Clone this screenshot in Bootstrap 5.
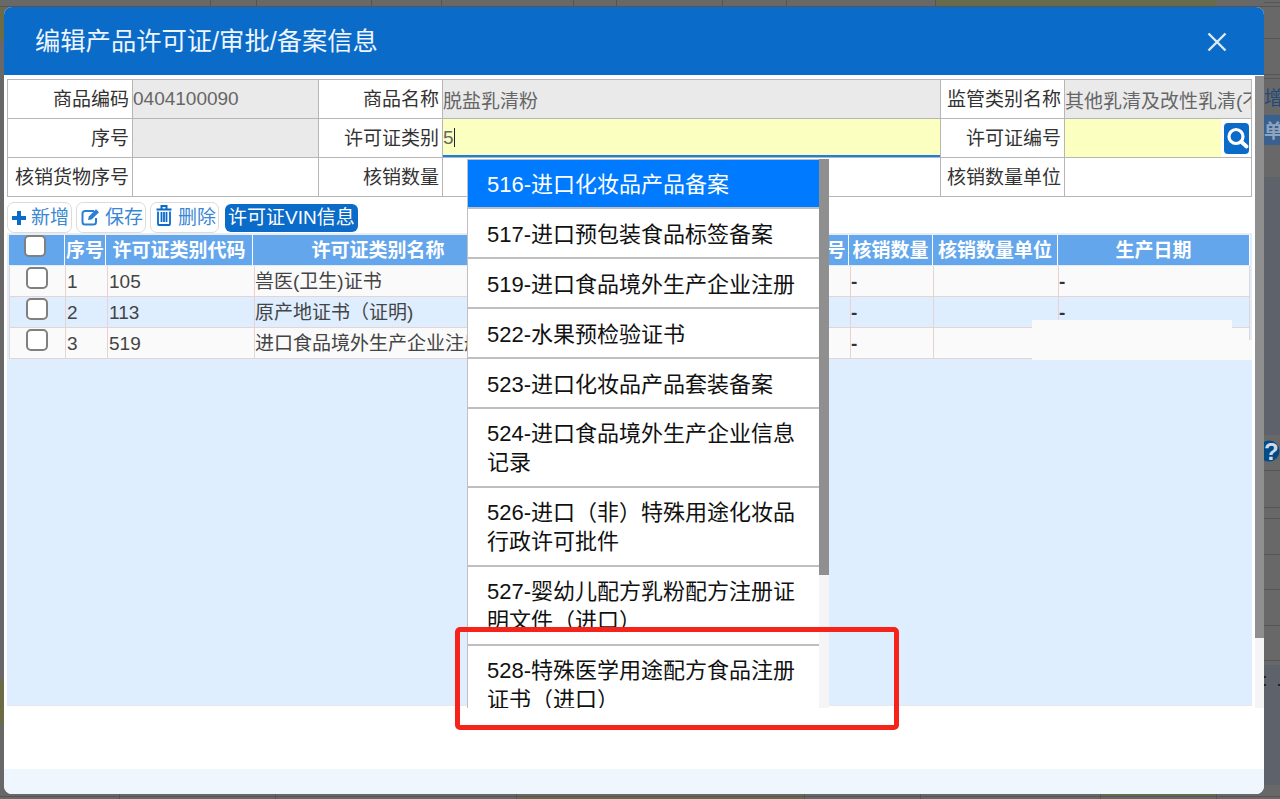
<!DOCTYPE html>
<html lang="zh-CN">
<head>
<meta charset="utf-8">
<title>编辑产品许可证/审批/备案信息</title>
<link href="https://cdn.jsdelivr.net/npm/bootstrap@5.3.0/dist/css/bootstrap.min.css" rel="stylesheet">
<style>
html,body{height:799px;overflow:hidden}
body{background:#686868;font-family:"Liberation Sans","Noto Sans CJK SC",sans-serif;font-size:19px;color:#333;position:relative}
.behind{position:absolute;left:0;top:0;width:1280px;height:799px}
.behind text{font-family:"Liberation Sans","Noto Sans CJK SC",sans-serif;font-size:19px}
.behind text.qmark{font-size:24px}
.dlg{position:relative;width:1260px;height:787px;margin:7px 0 0 4px;border:0;border-radius:8px;overflow:hidden;background:#fff}
.dlg-head{height:68px;flex:none;background:#0a6bc9;color:#eef5fd;padding:2px 37px 0 31px;border:0;border-radius:0}
.dlg-title{font-size:25.3px;line-height:1;margin:0;font-weight:400}
.dlg-x{padding:0;border:0;line-height:0}
.dlg-body{height:694px;flex:none;position:relative;padding:0}
.dlg-foot{height:25px;flex:none;background:#eff6fe;border:0;padding:0;border-radius:0}
.pane{width:1251px;padding:4px 3px 0 3px;flex:none}
.vbar{width:9px;height:632px;margin:1px 0 0 0;background:#f5f5f5;flex:none}
.vbar-thumb{height:562px;background:#8f8f8f}
.fm.table{width:1244px;table-layout:fixed;border-color:#b6b6b6;margin:0;--bs-table-bg:#fff}
.fm.table>*>*>*{height:39px;padding:0;border:1px solid #b6b6b6;font-size:19px;color:#333;box-shadow:none;vertical-align:middle}
.fm.table>*>*>th{font-weight:400;text-align:right;padding:2px 3px 0 0}
.fm .form-control{height:38px;border:0;border-radius:0;padding:0;font-size:19px;color:#666;background:transparent;box-shadow:none}
.fm .ro{background:#eaeaea}
.typed{height:38px;background:#fbffc0;border-bottom:2px solid #1a7fe0;color:#666;line-height:38px;padding-left:0}
.caret-bar{display:inline-block;width:1px;height:19px;background:#222;vertical-align:-3px}
.no-fill{width:156px;height:38px;background:#fbffc0;flex:none}
.find-btn{width:25px;height:31px;padding:0;margin-left:3px;border:0;border-radius:4px;background:#0a6bc9;line-height:0;flex:none}
.tools{height:31px;margin-top:5px}
.tool-btn{height:31px;padding:1px 2px 0 3px;font-size:19px;line-height:28px;color:#3a87d4;background:#fff;border:1px solid #dcdcdc;border-radius:7px;white-space:nowrap;justify-content:space-between}
.add-btn{width:65px}
.save-btn{width:70px;padding-left:4px}
.del-btn{width:69px;padding-left:5px}
.del-btn svg{margin-top:-6px}
.save-btn svg{margin-top:-2px}
.vin-btn{height:28px;padding:0 3px;margin-left:2px;font-size:19px;line-height:28px;color:#fff;background:#0a6bc9;border:0;border-radius:6px;white-space:nowrap}
.gridbox{height:473px;width:1245px;background:#deeeff;border-top:2px solid #e8eef3;border-bottom:1px solid #e3e9ef;padding-left:2px}
.gh.table,.gb.table{width:1241px;table-layout:fixed;margin:0;border-collapse:separate;border-spacing:0}
.gh.table>*>*>*{height:30px;padding:0;background:#64a6ec;color:#fff;font-size:19px;font-weight:700;text-align:center;border:0;border-right:1px solid #fff;line-height:28px;white-space:nowrap;overflow:hidden;box-shadow:none}
.gb.table{margin-top:1px}
.gb.table>*>*>*{height:31px;padding:2px 0 0 1px;background:#fafafa;color:#444;font-size:19px;font-weight:400;border:0;border-right:1px solid #e6d3d3;border-bottom:1px solid #e6d3d3;line-height:28px;white-space:nowrap;overflow:hidden;box-shadow:none;vertical-align:middle}
.gb.table>*>tr:nth-child(2)>*{background:#deeeff}
.gb.table>*>*>.chk-cell{padding:0 2px 0 0;text-align:center;line-height:0;vertical-align:top;border-left:1px solid #e6d3d3}
.gb.table>*>*>.name-cell{padding-left:0}
.gb.table>*>*>.dash-cell{font-weight:700;color:#333;padding-left:0}
.gh.table>*>*>.chk-cell{line-height:0;vertical-align:top;padding:0 4px 0 0}
.tick.form-check-input{width:22px;height:22px;margin:1px 0 0;border:2px solid #808080;border-radius:5px;background-color:#fff;float:none}
.gh .tick.form-check-input{margin-top:0}
.ac{position:absolute;left:463px;top:84px;width:362px;height:549px;overflow:hidden;background:#fff}
.ac-list{width:352px;border-radius:0;border-left:1px solid #c0c0c0}
.ac-list .list-group-item{padding:11px 20px 8px 19px;border:0;border-bottom:2px solid #bfbfbf;border-radius:0;font-size:22px;line-height:29px;color:#111;background:#fff}
.ac-list .list-group-item:first-child{padding-top:10px;border-top:1px solid #bfbfbf}
.ac-list .list-group-item.two-line{padding-top:10px;padding-bottom:9px}
.ac-list .list-group-item.active{background:#007bff;color:#fff}
.ac-bar{position:absolute;right:0;top:0;width:10px;height:549px;background:#f5f5f5}
.ac-bar-thumb{height:416px;background:#8f8f8f}
.mask-a{position:absolute;left:1028px;top:245px;width:200px;height:20px;background:#fafafa}
.mask-b{position:absolute;left:1028px;top:265px;width:220px;height:20px;background:#fafafa}
.red-box{position:absolute;left:451px;top:552px;width:444px;height:103px;border:5px solid #f5231a;border-radius:5px;pointer-events:none}
</style>
</head>
<body>
<svg class="behind" viewBox="0 0 1280 799" aria-hidden="true">
  <rect width="1280" height="799" fill="#686868"/>
  <rect x="935" y="0" width="281" height="7" fill="#666b4e"/>
  <rect x="0" y="7" width="4" height="34" fill="#6b6b45"/>
  <rect x="0" y="680" width="4" height="45" fill="#6b6b45"/>
  <rect x="516" y="797" width="288" height="2" fill="#666b4e"/>
  <rect x="1100" y="794" width="116" height="2" fill="#666b4e"/>
  <g fill="#555">
    <rect x="210" y="0" width="1" height="7"/><rect x="256" y="0" width="1" height="7"/><rect x="371" y="0" width="1" height="7"/>
    <rect x="441" y="0" width="1" height="7"/><rect x="573" y="0" width="1" height="7"/><rect x="616" y="0" width="1" height="7"/>
    <rect x="722" y="0" width="1" height="7"/><rect x="786" y="0" width="1" height="7"/><rect x="935" y="0" width="1" height="7"/>
    <rect x="119" y="794" width="1" height="5"/><rect x="275" y="794" width="1" height="5"/><rect x="516" y="794" width="1" height="5"/>
    <rect x="804" y="794" width="1" height="5"/><rect x="920" y="794" width="1" height="5"/><rect x="1100" y="794" width="1" height="5"/><rect x="1216" y="794" width="1" height="5"/>
    <rect x="0" y="6" width="1280" height="1"/><rect x="0" y="796" width="1280" height="1"/>
    <rect x="1264" y="2" width="16" height="1"/><rect x="1264" y="38" width="16" height="1"/><rect x="1264" y="74" width="16" height="1"/><rect x="1264" y="78" width="16" height="1"/>
    <rect x="1264" y="470" width="16" height="1"/><rect x="1264" y="507" width="16" height="1"/><rect x="1264" y="518" width="16" height="1"/>
    <rect x="1264" y="554" width="16" height="1"/><rect x="1264" y="589" width="16" height="1"/><rect x="1264" y="625" width="16" height="1"/><rect x="1264" y="660" width="16" height="1"/>
  </g>
  <rect x="1264" y="177" width="16" height="258" fill="#5e636b"/>
  <rect x="1264" y="665" width="16" height="120" fill="#5e636b"/>
  <rect x="1264" y="115" width="16" height="30" fill="#39608f"/>
  <text x="1264" y="105" fill="#1f4a7a">增</text>
  <text x="1264" y="138" fill="#8fa5be" font-weight="700">单</text>
  <circle cx="1269" cy="451" r="10.500" fill="#024a86"/>
  <text class="qmark" x="1264" y="460" fill="#cfd9e4" font-weight="700">?</text>
  <g fill="#222"><rect x="1264" y="676" width="2" height="2"/><rect x="1264" y="684" width="2" height="2"/><rect x="1278" y="684" width="2" height="2"/></g>
</svg>

<div class="modal-content dlg d-flex flex-column">
  <div class="modal-header dlg-head d-flex align-items-center justify-content-between">
    <h5 class="dlg-title">编辑产品许可证/审批/备案信息</h5>
    <button type="button" class="btn dlg-x" aria-label="关闭">
      <svg width="20" height="20" viewBox="0 0 20 20"><path d="M1.500 1.500L18.500 18.500M18.500 1.500L1.500 18.500" stroke="#dfeaf7" stroke-width="2.400" fill="none"/></svg>
    </button>
  </div>

  <div class="modal-body dlg-body d-flex">
    <div class="pane">
      <table class="table fm">
        <colgroup><col style="width:125px"><col style="width:186px"><col style="width:124px"><col style="width:498px"><col style="width:124px"><col style="width:187px"></colgroup>
        <tbody>
          <tr>
            <th>商品编码</th>
            <td class="ro"><input class="form-control" readonly value="0404100090"></td>
            <th>商品名称</th>
            <td class="ro"><input class="form-control" readonly value="脱盐乳清粉"></td>
            <th>监管类别名称</th>
            <td class="ro"><input class="form-control" readonly value="其他乳清及改性乳清(不论是否浓缩)"></td>
          </tr>
          <tr>
            <th>序号</th>
            <td class="ro"></td>
            <th>许可证类别</th>
            <td><div class="typed">5<span class="caret-bar"></span></div></td>
            <th>许可证编号</th>
            <td>
              <div class="d-flex align-items-center">
                <div class="no-fill"></div>
                <button type="button" class="btn find-btn" aria-label="查询">
                  <svg width="25" height="31" viewBox="0 0 25 31"><circle cx="12" cy="13.500" r="7" fill="none" stroke="#fff" stroke-width="3.200"/><path d="M17.500 19L22.500 23.500" stroke="#fff" stroke-width="3.800" stroke-linecap="round"/></svg>
                </button>
              </div>
            </td>
          </tr>
          <tr>
            <th>核销货物序号</th><td></td>
            <th>核销数量</th><td></td>
            <th>核销数量单位</th><td></td>
          </tr>
        </tbody>
      </table>

      <div class="tools d-flex align-items-center gap-1">
        <button type="button" class="btn tool-btn add-btn d-flex align-items-center">
          <svg width="16" height="16" viewBox="0 0 16 16"><path d="M8 1V15M1 8H15" stroke="#0a6bc9" stroke-width="4"/></svg>
          <span>新增</span></button>
        <button type="button" class="btn tool-btn save-btn d-flex align-items-center">
          <svg width="20" height="18" viewBox="0 0 20 18"><path d="M13 3H4A2.500 2.500 0 0 0 1.500 5.500V14A2.500 2.500 0 0 0 4 16.500H12.500A2.500 2.500 0 0 0 15 14V10" fill="none" stroke="#2a7fd4" stroke-width="2"/><path d="M7 12L7.800 8.500L15 1.300L18 4.200L10.700 11.400Z" fill="#2a7fd4"/></svg>
          <span>保存</span></button>
        <button type="button" class="btn tool-btn del-btn d-flex align-items-center">
          <svg width="16" height="22" viewBox="0 0 16 22"><path d="M0.500 5.500H15.500M5.500 5V2H10.500V5" fill="none" stroke="#0a6bc9" stroke-width="2"/><path d="M2 7.500V20A1 1 0 0 0 3 21H13A1 1 0 0 0 14 20V7.500M5.500 8V18M8 8V18M10.500 8V18" fill="none" stroke="#0a6bc9" stroke-width="1.800"/></svg>
          <span>删除</span></button>
        <button type="button" class="btn vin-btn">许可证VIN信息</button>
      </div>

      <div class="gridbox">
        <table class="table gh">
          <colgroup><col style="width:56px"><col style="width:41px"><col style="width:147px"><col style="width:251px"><col style="width:225px"><col style="width:120px"><col style="width:84px"><col style="width:125px"><col style="width:192px"></colgroup>
          <thead>
            <tr>
              <th class="chk-cell"><input class="form-check-input tick" type="checkbox" aria-label="全选"></th>
              <th>序号</th><th>许可证类别代码</th><th>许可证类别名称</th><th></th><th>核销货物序号</th><th>核销数量</th><th>核销数量单位</th><th>生产日期</th>
            </tr>
          </thead>
        </table>
        <table class="table gb">
          <colgroup><col style="width:57px"><col style="width:42px"><col style="width:147px"><col style="width:251px"><col style="width:225px"><col style="width:120px"><col style="width:83px"><col style="width:125px"><col style="width:191px"></colgroup>
          <tbody>
            <tr><td class="chk-cell"><input class="form-check-input tick" type="checkbox" aria-label="选择"></td><td>1</td><td>105</td><td class="name-cell">兽医(卫生)证书</td><td></td><td></td><td class="dash-cell">-</td><td></td><td class="dash-cell">-</td></tr>
            <tr><td class="chk-cell"><input class="form-check-input tick" type="checkbox" aria-label="选择"></td><td>2</td><td>113</td><td class="name-cell">原产地证书（证明)</td><td></td><td></td><td class="dash-cell">-</td><td></td><td class="dash-cell">-</td></tr>
            <tr><td class="chk-cell"><input class="form-check-input tick" type="checkbox" aria-label="选择"></td><td>3</td><td>519</td><td class="name-cell">进口食品境外生产企业注册</td><td></td><td></td><td class="dash-cell">-</td><td></td><td></td></tr>
          </tbody>
        </table>
      </div>
    </div>
    <div class="vbar ms-auto"><div class="vbar-thumb"></div></div>

    <div class="mask-a"></div>
    <div class="mask-b"></div>

    <div class="ac">
      <ul class="list-group ac-list">
        <li class="list-group-item active">516-进口化妆品产品备案</li>
        <li class="list-group-item">517-进口预包装食品标签备案</li>
        <li class="list-group-item">519-进口食品境外生产企业注册</li>
        <li class="list-group-item">522-水果预检验证书</li>
        <li class="list-group-item">523-进口化妆品产品套装备案</li>
        <li class="list-group-item two-line">524-进口食品境外生产企业信息记录</li>
        <li class="list-group-item two-line">526-进口（非）特殊用途化妆品行政许可批件</li>
        <li class="list-group-item two-line">527-婴幼儿配方乳粉配方注册证明文件（进口）</li>
        <li class="list-group-item two-line">528-特殊医学用途配方食品注册证书（进口）</li>
      </ul>
      <div class="ac-bar"><div class="ac-bar-thumb"></div></div>
    </div>

    <div class="red-box"></div>
  </div>

  <div class="modal-footer dlg-foot"></div>
</div>
<script src="https://cdn.jsdelivr.net/npm/bootstrap@5.3.0/dist/js/bootstrap.bundle.min.js"></script>
</body>
</html>
